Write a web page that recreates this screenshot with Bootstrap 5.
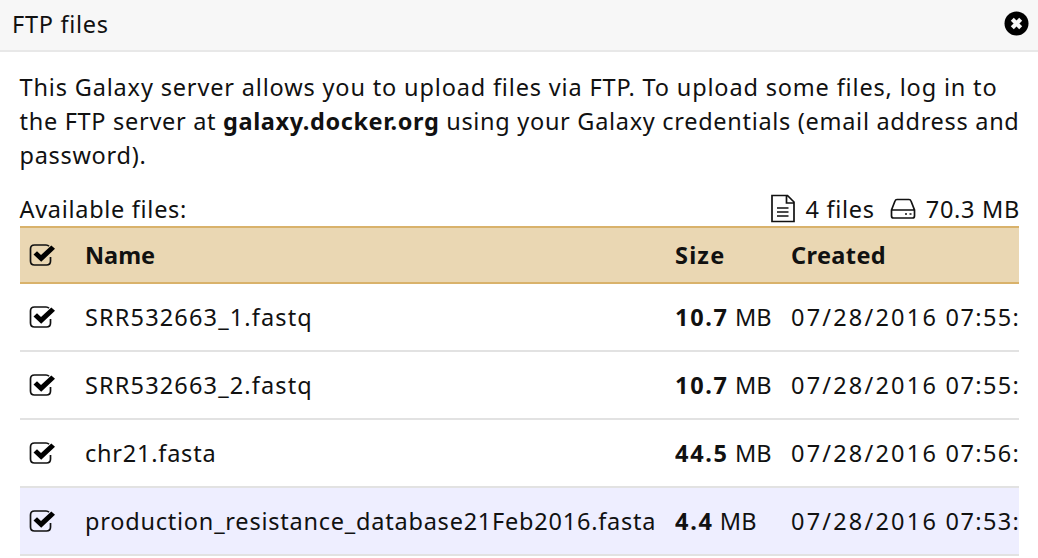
<!DOCTYPE html>
<html lang="en">
<head>
<meta charset="utf-8">
<title>FTP files</title>
<link href="https://cdn.jsdelivr.net/npm/bootstrap@5.3.0/dist/css/bootstrap.min.css" rel="stylesheet">
<style>
body{font-family:"Noto Sans","Open Sans",sans-serif;font-size:23.5px;line-height:34px;color:#111;background:#fff;overflow:hidden;height:558px;letter-spacing:.7px}
.ftp-head{height:52px;background:#f7f7f7;border-bottom:2px solid #e8e8e8;padding:0 9px 3px 12px}
.ftp-body{padding:18px 19px 0 19.5px}
.ftp-info{height:102px}
.ftp-stats{margin-top:20px}
.ln{display:block;white-space:nowrap}
.wide{letter-spacing:.84px}
.host{letter-spacing:.6px}
.ftp-table{table-layout:fixed;width:999.5px}
.ftp-table th,.ftp-table td{padding:0;white-space:nowrap;overflow:hidden;color:#111;background:transparent;vertical-align:middle;border:0}
.ftp-table thead tr{height:56px;background:#ead7b3;border-top:2px solid #d9b26b;border-bottom:2px solid #d9b26b}
.ftp-table tbody tr{height:68px;border-bottom:2px solid #e2e2e2}
.ftp-table tbody tr.picked{background:#eeeeff}
.ftp-table svg{display:block;margin-left:9px}
.ftp-table th{letter-spacing:.4px}
.ftp-table th:nth-child(2){letter-spacing:0}
.ftp-table th:nth-child(3){letter-spacing:1.2px}
.ftp-table td:nth-child(2){letter-spacing:.77px}
.ftp-table td.run{letter-spacing:1.15px}
.ftp-table td:nth-child(3){letter-spacing:.1px}
.ftp-table td b{letter-spacing:1.7px}
.ftp-table td:nth-child(4){letter-spacing:1.4px}
.ftp-table .day{letter-spacing:2.2px}
</style>
</head>
<body>
<svg width="0" height="0" class="position-absolute"><defs>
<symbol id="check" viewBox="0 0 28 24"><path d="M20 3.2Q19 2 17 2H5.5Q1.500 2 1.500 6V18Q1.500 22 5.500 22H17.500Q21.500 22 21.500 18V14" fill="none" stroke="#111" stroke-width="1.700"/><path d="M4.500 11.500L8 8.200L12 12L22.300 2.500L26 5.800L12.200 18.800Z" fill="#000"/></symbol>
</defs></svg>
<header class="ftp-head d-flex align-items-center justify-content-between">
<span class="ln">FTP files</span>
<svg width="25" height="25" viewBox="0 0 25 25"><circle cx="12.500" cy="12.500" r="12" fill="#000"/><path d="M8.300 8.300L16.700 16.700M16.700 8.300L8.300 16.700" stroke="#f7f7f7" stroke-width="4.200"/></svg>
</header>
<main class="ftp-body">
<p class="ftp-info mb-0"><span class="ln wide">This Galaxy server allows you to upload files via FTP. To upload some files, log in to</span> <span class="ln">the FTP server at <b class="host">galaxy.docker.org</b> using your Galaxy credentials (email address and</span> <span class="ln">password).</span></p>
<div class="ftp-stats d-flex justify-content-between">
<span>Available files:</span>
<span class="d-flex align-items-center">
<svg width="26" height="30" viewBox="0 0 26 30" fill="none" stroke="#111" stroke-width="1.700"><path d="M2 1.500H17.500L24 8V27.500H2ZM16.500 1.500V9H24M7 14H18.500M7 18H18.500M7 22H18.500"/></svg>
<span style="margin-left:10px">4 files</span>
<svg style="margin-left:15px" width="26" height="22" viewBox="0 0 26 22" fill="none" stroke="#111" stroke-width="1.700"><path d="M1.500 12L5 3Q5.500 1.500 7 1.500H19Q20.500 1.500 21 3L24.500 12V18Q24.500 20 22.500 20H3.500Q1.500 20 1.500 18ZM1.500 12H24.500M15 16H17M19.500 16H21.500"/></svg>
<span style="margin-left:10px;margin-right:-1px">70.3 MB</span>
</span>
</div>
<table class="table ftp-table mb-0">
<colgroup><col style="width:65.5px"><col style="width:590px"><col style="width:116px"><col></colgroup>
<thead><tr><th><svg width="28" height="24"><use href="#check"/></svg></th><th>Name</th><th>Size</th><th>Created</th></tr></thead>
<tbody>
<tr><td><svg width="28" height="24"><use href="#check"/></svg></td><td class="run">SRR532663_1.fastq</td><td><b>10.7</b> MB</td><td><span class="day">07/28/2016</span> 07:55:</td></tr>
<tr><td><svg width="28" height="24"><use href="#check"/></svg></td><td class="run">SRR532663_2.fastq</td><td><b>10.7</b> MB</td><td><span class="day">07/28/2016</span> 07:55:</td></tr>
<tr><td><svg width="28" height="24"><use href="#check"/></svg></td><td>chr21.fasta</td><td><b>44.5</b> MB</td><td><span class="day">07/28/2016</span> 07:56:</td></tr>
<tr class="picked"><td><svg width="28" height="24"><use href="#check"/></svg></td><td>production_resistance_database21Feb2016.fasta</td><td><b>4.4</b> MB</td><td><span class="day">07/28/2016</span> 07:53:</td></tr>
</tbody>
</table>
</main>
<script src="https://cdn.jsdelivr.net/npm/bootstrap@5.3.0/dist/js/bootstrap.bundle.min.js"></script>
</body>
</html>
